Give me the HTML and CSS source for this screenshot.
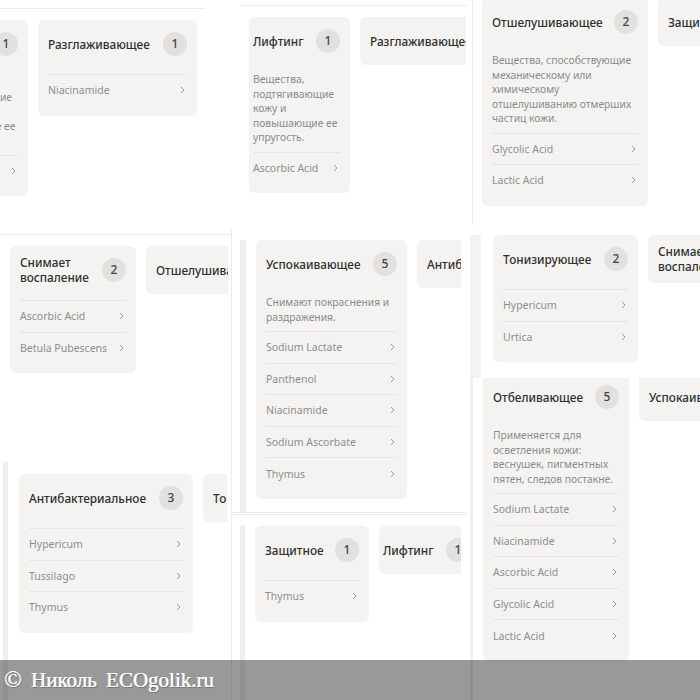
FILE: index.html
```html
<!DOCTYPE html>
<html lang="ru">
<head>
<meta charset="UTF-8">
<title>Свойства ингредиентов</title>
<link rel="stylesheet" href="styles.css">
</head>
<body>

<div class="collage">
    <!-- левая колонка -->
    <div class="col">
        <section class="shot shot-a">
            <div class="rule rule-a"></div>
            <div class="row row-a">
                <div class="card card-lift">
                    <div class="card-head"><span class="card-title">Лифтинг</span><span class="badge">1</span></div>
                    <div class="card-body">
                        <p class="card-desc">Вещества,<br>подтягивающие<br>кожу и<br>повышающие ее<br>упругость.</p>
                        <div class="item"><span>Ascorbic Acid</span><svg class="chev" viewBox="0 0 5 8"><polyline points="1,1 4,4 1,7"/></svg></div>
                    </div>
                </div>
                <div class="card card-smooth">
                    <div class="card-head"><span class="card-title">Разглаживающее</span><span class="badge">1</span></div>
                    <div class="card-body">
                        <div class="item"><span>Niacinamide</span><svg class="chev" viewBox="0 0 5 8"><polyline points="1,1 4,4 1,7"/></svg></div>
                    </div>
                </div>
            </div>
        </section>
        <section class="shot shot-b">
            <div class="rule rule-b"></div>
            <div class="row row-b">
                <div class="card card-inflam">
                    <div class="card-head"><span class="card-title">Снимает<br>воспаление</span><span class="badge">2</span></div>
                    <div class="card-body">
                        <div class="item"><span>Ascorbic Acid</span><svg class="chev" viewBox="0 0 5 8"><polyline points="1,1 4,4 1,7"/></svg></div>
                        <div class="item"><span>Betula Pubescens</span><svg class="chev" viewBox="0 0 5 8"><polyline points="1,1 4,4 1,7"/></svg></div>
                    </div>
                </div>
                <div class="card card-exfol">
                    <div class="card-head"><span class="card-title">Отшелушивающее</span><span class="badge">2</span></div>
                </div>
            </div>
        </section>
        <section class="shot shot-c">
            <div class="strip strip-c"></div>
            <div class="row row-c">
                <div class="card card-antibac">
                    <div class="card-head"><span class="card-title">Антибактериальное</span><span class="badge">3</span></div>
                    <div class="card-body">
                        <div class="item"><span>Hypericum</span><svg class="chev" viewBox="0 0 5 8"><polyline points="1,1 4,4 1,7"/></svg></div>
                        <div class="item"><span>Tussilago</span><svg class="chev" viewBox="0 0 5 8"><polyline points="1,1 4,4 1,7"/></svg></div>
                        <div class="item"><span>Thymus</span><svg class="chev" viewBox="0 0 5 8"><polyline points="1,1 4,4 1,7"/></svg></div>
                    </div>
                </div>
                <div class="card card-tonic">
                    <div class="card-head"><span class="card-title">Тонизирующее</span><span class="badge">2</span></div>
                </div>
            </div>
        </section>
    </div>

    <!-- средняя колонка -->
    <div class="col">
        <section class="shot shot-d">
            <div class="rule rule-d"></div>
            <div class="row row-d">
                <div class="card card-lift">
                    <div class="card-head"><span class="card-title">Лифтинг</span><span class="badge">1</span></div>
                    <div class="card-body">
                        <p class="card-desc">Вещества,<br>подтягивающие<br>кожу и<br>повышающие ее<br>упругость.</p>
                        <div class="item"><span>Ascorbic Acid</span><svg class="chev" viewBox="0 0 5 8"><polyline points="1,1 4,4 1,7"/></svg></div>
                    </div>
                </div>
                <div class="card card-smooth">
                    <div class="card-head"><span class="card-title">Разглаживающее</span><span class="badge">1</span></div>
                </div>
            </div>
        </section>
        <section class="shot shot-e">
            <div class="shot-body">
                <div class="strip strip-e"></div>
                <div class="row row-e">
                    <div class="card card-calm">
                        <div class="card-head"><span class="card-title">Успокаивающее</span><span class="badge">5</span></div>
                        <div class="card-body">
                            <p class="card-desc">Снимают покраснения и<br>раздражения.</p>
                            <div class="item"><span>Sodium Lactate</span><svg class="chev" viewBox="0 0 5 8"><polyline points="1,1 4,4 1,7"/></svg></div>
                            <div class="item"><span>Panthenol</span><svg class="chev" viewBox="0 0 5 8"><polyline points="1,1 4,4 1,7"/></svg></div>
                            <div class="item"><span>Niacinamide</span><svg class="chev" viewBox="0 0 5 8"><polyline points="1,1 4,4 1,7"/></svg></div>
                            <div class="item"><span>Sodium Ascorbate</span><svg class="chev" viewBox="0 0 5 8"><polyline points="1,1 4,4 1,7"/></svg></div>
                            <div class="item"><span>Thymus</span><svg class="chev" viewBox="0 0 5 8"><polyline points="1,1 4,4 1,7"/></svg></div>
                        </div>
                    </div>
                    <div class="card card-antibac">
                        <div class="card-head"><span class="card-title">Антибактериальное</span><span class="badge">3</span></div>
                    </div>
                </div>
            </div>
            <div class="rule rule-e"></div>
        </section>
        <section class="shot shot-f">
            <div class="rule rule-f"></div>
            <div class="shot-body">
                <div class="strip strip-f"></div>
                <div class="row row-f">
                    <div class="card card-protect">
                        <div class="card-head"><span class="card-title">Защитное</span><span class="badge">1</span></div>
                        <div class="card-body">
                            <div class="item"><span>Thymus</span><svg class="chev" viewBox="0 0 5 8"><polyline points="1,1 4,4 1,7"/></svg></div>
                        </div>
                    </div>
                    <div class="card card-lift">
                        <div class="card-head"><span class="card-title">Лифтинг</span><span class="badge">1</span></div>
                    </div>
                </div>
            </div>
        </section>
    </div>

    <!-- правая колонка -->
    <div class="col">
        <section class="shot shot-g">
            <div class="strip strip-g"></div>
            <div class="row row-g">
                <div class="card card-exfol">
                    <div class="card-head"><span class="card-title">Отшелушивающее</span><span class="badge">2</span></div>
                    <div class="card-body">
                        <p class="card-desc">Вещества, способствующие<br>механическому или<br>химическому<br>отшелушиванию отмерших<br>частиц кожи.</p>
                        <div class="item"><span>Glycolic Acid</span><svg class="chev" viewBox="0 0 5 8"><polyline points="1,1 4,4 1,7"/></svg></div>
                        <div class="item"><span>Lactic Acid</span><svg class="chev" viewBox="0 0 5 8"><polyline points="1,1 4,4 1,7"/></svg></div>
                    </div>
                </div>
                <div class="card card-protect">
                    <div class="card-head"><span class="card-title">Защитное</span><span class="badge">1</span></div>
                </div>
            </div>
        </section>
        <section class="shot shot-h">
            <div class="strip strip-h"></div>
            <div class="row row-h">
                <div class="card card-tonic">
                    <div class="card-head"><span class="card-title">Тонизирующее</span><span class="badge">2</span></div>
                    <div class="card-body">
                        <div class="item"><span>Hypericum</span><svg class="chev" viewBox="0 0 5 8"><polyline points="1,1 4,4 1,7"/></svg></div>
                        <div class="item"><span>Urtica</span><svg class="chev" viewBox="0 0 5 8"><polyline points="1,1 4,4 1,7"/></svg></div>
                    </div>
                </div>
                <div class="card card-inflam">
                    <div class="card-head"><span class="card-title">Снимает<br>воспаление</span><span class="badge">2</span></div>
                </div>
            </div>
        </section>
        <section class="shot shot-i">
            <div class="strip strip-i"></div>
            <div class="row row-i">
                <div class="card card-whiten">
                    <div class="card-head"><span class="card-title">Отбеливающее</span><span class="badge">5</span></div>
                    <div class="card-body">
                        <p class="card-desc">Применяется для<br>осветления кожи:<br>веснушек, пигментных<br>пятен, следов постакне.</p>
                        <div class="item"><span>Sodium Lactate</span><svg class="chev" viewBox="0 0 5 8"><polyline points="1,1 4,4 1,7"/></svg></div>
                        <div class="item"><span>Niacinamide</span><svg class="chev" viewBox="0 0 5 8"><polyline points="1,1 4,4 1,7"/></svg></div>
                        <div class="item"><span>Ascorbic Acid</span><svg class="chev" viewBox="0 0 5 8"><polyline points="1,1 4,4 1,7"/></svg></div>
                        <div class="item"><span>Glycolic Acid</span><svg class="chev" viewBox="0 0 5 8"><polyline points="1,1 4,4 1,7"/></svg></div>
                        <div class="item"><span>Lactic Acid</span><svg class="chev" viewBox="0 0 5 8"><polyline points="1,1 4,4 1,7"/></svg></div>
                    </div>
                </div>
                <div class="card card-calm">
                    <div class="card-head"><span class="card-title">Успокаивающее</span><span class="badge">5</span></div>
                </div>
            </div>
        </section>
    </div>

    <div class="watermark"><span class="copy">©</span> Николь ECOgolik.ru</div>
</div>

</body>
</html>
```

FILE: styles.css
```css
* {
    box-sizing: border-box;
}
body {
    margin: 0;
    background: #fff;
    font-family: "Noto Sans", "Open Sans", sans-serif;
}
.collage {
    position: relative;
    width: 700px;
    height: 700px;
    overflow: hidden;
    display: grid;
    grid-template-columns: 232px 238px 230px;
}
.col {
    display: flex;
    flex-direction: column;
    min-width: 0;
}
.shot {
    flex: none;
    overflow: hidden;
}
.rule {
    flex: none;
    height: 1px;
    background: #ececec;
}
.strip {
    flex: none;
    align-self: stretch;
    background: #efefef;
}
.shot-body {
    flex: 1;
    display: flex;
    align-items: flex-start;
}
.row {
    flex: none;
    display: flex;
    align-items: flex-start;
    gap: 10px;
    overflow: hidden;
}

/* карточка */
.card {
    flex: none;
    background: #f4f3f1;
    border-radius: 6px;
    padding: 0 10px;
}
.card-head {
    height: 48px;
    display: flex;
    align-items: center;
    justify-content: space-between;
    gap: 6px;
}
.card-title {
    font-size: 11.8px;
    font-weight: 500;
    line-height: 15px;
    color: #2f2f2f;
    white-space: nowrap;
}
.badge {
    flex: none;
    width: 24px;
    height: 24px;
    border-radius: 50%;
    background: #e2e1df;
    color: #444;
    font-size: 12px;
    font-weight: 500;
    line-height: 24px;
    text-align: center;
}
.card-body {
    padding: 6px 0 10px;
}
.card-desc {
    margin: 0;
    padding: 1px 0 7px;
    font-size: 10.3px;
    line-height: 14.5px;
    color: #8b8b8b;
    white-space: nowrap;
}
.item {
    height: 31.6px;
    border-top: 1px solid #e6e5e3;
    display: flex;
    align-items: center;
    justify-content: space-between;
    padding-right: 2px;
    font-size: 10.5px;
    color: #8e8e8e;
    white-space: nowrap;
}
.chev {
    width: 5px;
    height: 8px;
    fill: none;
    stroke: #9a9a9a;
    stroke-width: 1;
}

.card-lift { width: 101px; padding-left: 4px; }
.card-smooth { width: 159px; }
.card-inflam { width: 126px; }
.card-exfol { width: 166px; }
.card-antibac { width: 174px; }
.card-tonic { width: 145px; }
.card-calm { width: 151px; }
.card-protect { width: 114px; }
.card-whiten { width: 146px; }

/* левая колонка */
.shot-a { height: 230px; }
.rule-a { width: 205px; margin-top: 8px; }
.row-a { margin: 11px 0 0 -73px; }

.shot-b { height: 232px; border-right: 1px solid #ececec; }
.rule-b { margin-top: 4px; }
.row-b { margin: 11px 0 0 10px; width: 218px; }

.shot-c {
    flex: 1;
    display: flex;
    align-items: flex-start;
    border-right: 1px solid #ececec;
}
.strip-c { margin-left: 3px; width: 5px; }
.row-c { margin: 12px 0 0 11px; width: 208px; }

/* средняя колонка */
.shot-d { height: 228px; }
.rule-d { width: 227px; margin: 5px 0 0 8px; }
.row-d { margin: 11px 0 0 17px; width: 217px; }

.shot-e {
    height: 285px;
    padding-top: 12px;
    display: flex;
    flex-direction: column;
}
.strip-e { margin-left: 8px; width: 6px; }
.row-e { margin-left: 10px; width: 205px; }
.rule-e { width: 235px; }

.shot-f {
    flex: 1;
    display: flex;
    flex-direction: column;
}
.rule-f { width: 235px; margin-top: 1px; }
.shot-f .shot-body { margin-top: 10px; }
.strip-f { margin-left: 8px; width: 5px; }
.row-f { margin: 1px 0 0 10px; width: 206px; }

/* правая колонка */
.shot-g {
    height: 225px;
    display: flex;
    align-items: flex-start;
}
.strip-g { margin-left: 2px; width: 1px; background: #ececec; }
.row-g { margin: -2px 0 0 9px; width: 218px; }

.shot-h {
    height: 153px;
    padding-top: 10px;
    display: flex;
    align-items: flex-start;
}
.strip-h { width: 11px; background: #f4f3f1; }
.row-h { margin-left: 12px; width: 207px; }

.shot-i {
    flex: 1;
    display: flex;
    align-items: flex-start;
}
.strip-i { width: 3px; }
.row-i { margin: -5px 0 0 10px; width: 217px; }

.watermark {
    position: absolute;
    left: 0;
    right: 0;
    bottom: 0;
    height: 40px;
    padding-left: 4px;
    display: flex;
    align-items: center;
    white-space: pre;
    background: rgba(0, 0, 0, 0.4);
    color: #fafafa;
    font-family: "Liberation Serif", serif;
    font-size: 21px;
    word-spacing: 4px;
    text-shadow: 0.5px 0 0 #fafafa, 1px 1px 1px rgba(0, 0, 0, 0.3);
}
.copy {
    font-size: 23px;
}
```
